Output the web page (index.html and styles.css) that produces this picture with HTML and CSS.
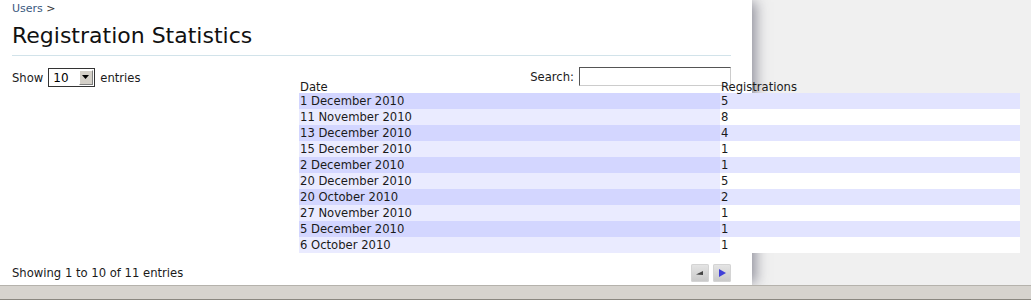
FILE: index.html
```html
<!DOCTYPE html>
<html lang="en">
  <head>
    <meta charset="UTF-8" />
    <title>Registration Statistics</title>
    <link rel="stylesheet" href="styles.css">
  </head>
  <body>
    <div class="screen">
      <div class="main">
        <div class="panel">
          <div class="breadcrumb"><a href="#">Users</a> &gt;</div>
          <h1>Registration Statistics</h1>

          <div class="dt-top">
            <div class="dt-length">
              Show
              <span class="select-box">
                <select>
                  <option>10</option>
                  <option>25</option>
                  <option>50</option>
                  <option>100</option>
                </select>
                <span class="select-btn">
                  <svg width="9" height="5" viewBox="0 0 9 5"><path d="M1 0h7L4.5 4z" fill="#000"/></svg>
                </span>
              </span>
              entries
            </div>
            <div class="dt-filter">
              Search: <input type="text" />
            </div>
          </div>

          <table class="stats">
            <thead>
              <tr><th class="col-date">Date</th><th>Registrations</th></tr>
            </thead>
            <tbody>
              <tr class="odd"><td class="sorted">1 December 2010</td><td>5</td></tr>
              <tr class="even"><td class="sorted">11 November 2010</td><td>8</td></tr>
              <tr class="odd"><td class="sorted">13 December 2010</td><td>4</td></tr>
              <tr class="even"><td class="sorted">15 December 2010</td><td>1</td></tr>
              <tr class="odd"><td class="sorted">2 December 2010</td><td>1</td></tr>
              <tr class="even"><td class="sorted">20 December 2010</td><td>5</td></tr>
              <tr class="odd"><td class="sorted">20 October 2010</td><td>2</td></tr>
              <tr class="even"><td class="sorted">27 November 2010</td><td>1</td></tr>
              <tr class="odd"><td class="sorted">5 December 2010</td><td>1</td></tr>
              <tr class="even"><td class="sorted">6 October 2010</td><td>1</td></tr>
            </tbody>
          </table>

          <div class="dt-bottom">
            <div class="dt-info">Showing 1 to 10 of 11 entries</div>
            <div class="dt-paginate">
              <span class="page-btn disabled">
                <svg width="10" height="8" viewBox="0 0 10 8"><path d="M1 5.5L8 2v4z" fill="#444"/></svg>
              </span>
              <span class="page-btn">
                <svg width="10" height="10" viewBox="0 0 10 10"><path d="M2 1l7 4-7 4z" fill="#4040d8"/></svg>
              </span>
            </div>
          </div>
        </div>
      </div>
      <div class="status-bar"></div>
    </div>
  </body>
</html>
```

FILE: styles.css
```css
body {
  margin: 0;
  font-family: "DejaVu Sans", Verdana, sans-serif;
  font-size: 11.6px;
  color: #1a1a1a;
  background-color: #f0f0f0;
}

.screen {
  height: 300px;
  display: flex;
  flex-direction: column;
}

.main {
  flex: 1;
  display: flex;
}

.panel {
  width: 728px;
  padding: 0 12px;
  background-color: #fff;
  box-shadow: 6px 0 12px -2px rgba(70, 70, 90, 0.55);
}

.breadcrumb {
  font-size: 11px;
  line-height: 14px;
  padding-top: 2px;
  color: #333;
}

.breadcrumb a {
  color: #3a5a80;
  text-decoration: none;
}

h1 {
  margin: 0;
  padding: 5px 0 4px;
  font-size: 22px;
  font-weight: normal;
  line-height: 30px;
  color: #111;
  width: 719px;
  border-bottom: 1px solid #d2e3ea;
}

.dt-top {
  width: 719px;
  display: flex;
  justify-content: space-between;
  align-items: center;
  margin-top: 12px;
}

.dt-length {
  display: flex;
  align-items: center;
  gap: 5px;
}

.select-box {
  display: flex;
  width: 45px;
  height: 17px;
  border: 1px solid #333;
  background: #fff;
}

.select-box select {
  appearance: none;
  -webkit-appearance: none;
  border: none;
  outline: none;
  background: transparent;
  font-family: "DejaVu Sans", Verdana, sans-serif;
  font-size: 12px;
  padding: 0 0 0 4px;
  width: 29px;
  height: 17px;
  color: #000;
}

.select-btn {
  width: 15px;
  height: 15px;
  margin: 1px;
  display: flex;
  align-items: center;
  justify-content: center;
  background: #d4d0c8;
  border-top: 1px solid #fff;
  border-left: 1px solid #fff;
  border-right: 1px solid #808080;
  border-bottom: 1px solid #808080;
  box-sizing: border-box;
}

.dt-filter {
  display: flex;
  align-items: center;
  gap: 5px;
  margin-top: -2px;
}

.dt-filter input {
  width: 150px;
  height: 17px;
  padding: 0;
  border: 1px solid #555;
  border-right-color: #ccc;
  border-bottom-color: #ccc;
  font-size: 12px;
}

.stats {
  border-collapse: collapse;
  width: 721px;
  margin: -10px 0 0 287px;
}

.stats th {
  text-align: left;
  font-weight: normal;
  padding: 0 1px;
  height: 16px;
  line-height: 12px;
  vertical-align: bottom;
}

.stats td {
  padding: 0 1px;
  height: 16px;
  line-height: 16px;
}

.stats .col-date {
  width: 419px;
}

.odd td {
  background-color: #e2e4ff;
}

.odd td.sorted {
  background-color: #d3d6ff;
}

.even td {
  background-color: #fff;
}

.even td.sorted {
  background-color: #eaebff;
}

.dt-bottom {
  width: 719px;
  display: flex;
  justify-content: space-between;
  align-items: center;
  margin-top: 11px;
}

.dt-paginate {
  display: flex;
  gap: 4px;
}

.page-btn {
  width: 18px;
  height: 18px;
  display: flex;
  align-items: center;
  justify-content: center;
  border-radius: 2px;
  background: linear-gradient(#e6e6e6, #c8c8c8);
  box-shadow: inset 0 0 0 1px #d4d4d4;
}

.status-bar {
  height: 13px;
  background-color: #d6d3ce;
  border-top: 1px solid #b5b2ac;
  border-bottom: 1px solid #8a8780;
}
```
